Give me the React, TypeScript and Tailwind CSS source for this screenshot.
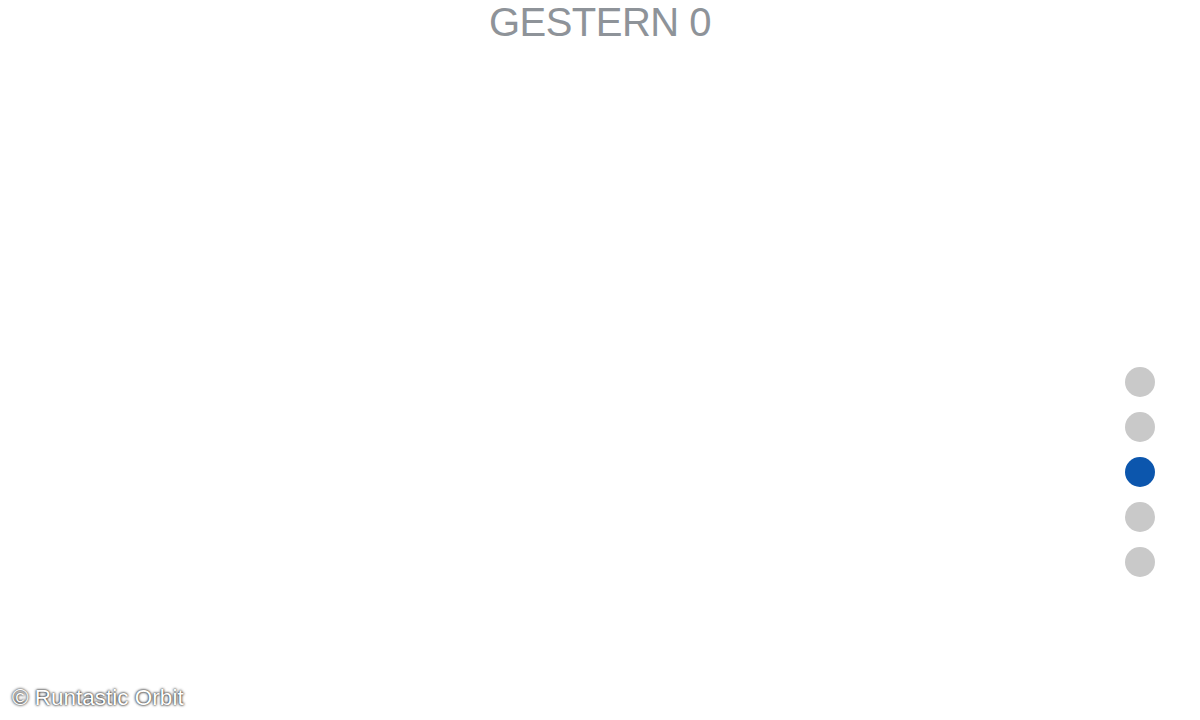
export default function App() {
  const pages = [0, 1, 2, 3, 4];
  const active = 2;

  return (
    <div className="relative flex h-[720px] w-[1200px] flex-col overflow-hidden bg-white font-['Liberation_Sans',Arial,sans-serif]">
      {/* Header */}
      <div className="flex justify-center pt-[2px]">
        <h1 className="text-[40px] leading-none font-normal tracking-[-0.5px] text-[#8e9399]">GESTERN 0</h1>
      </div>

      {/* Body with page indicator */}
      <div className="flex flex-1 justify-end pr-[45px] pt-[325px]">
        <div className="flex flex-col gap-[15px]">
          {pages.map((p) => (
            <div
              key={p}
              className={p === active ? 'h-[30px] w-[30px] rounded-full bg-[#0c56ad]' : 'h-[30px] w-[30px] rounded-full bg-[#c9c9c9]'}
            />
          ))}
        </div>
      </div>

      {/* Watermark */}
      <div className="absolute bottom-[11px] left-[12px] text-[22.5px] leading-none text-white [text-shadow:0_0_3px_rgba(0,0,0,0.9),0_0_2px_rgba(0,0,0,0.7)]">
        © Runtastic Orbit
      </div>
    </div>
  );
}
